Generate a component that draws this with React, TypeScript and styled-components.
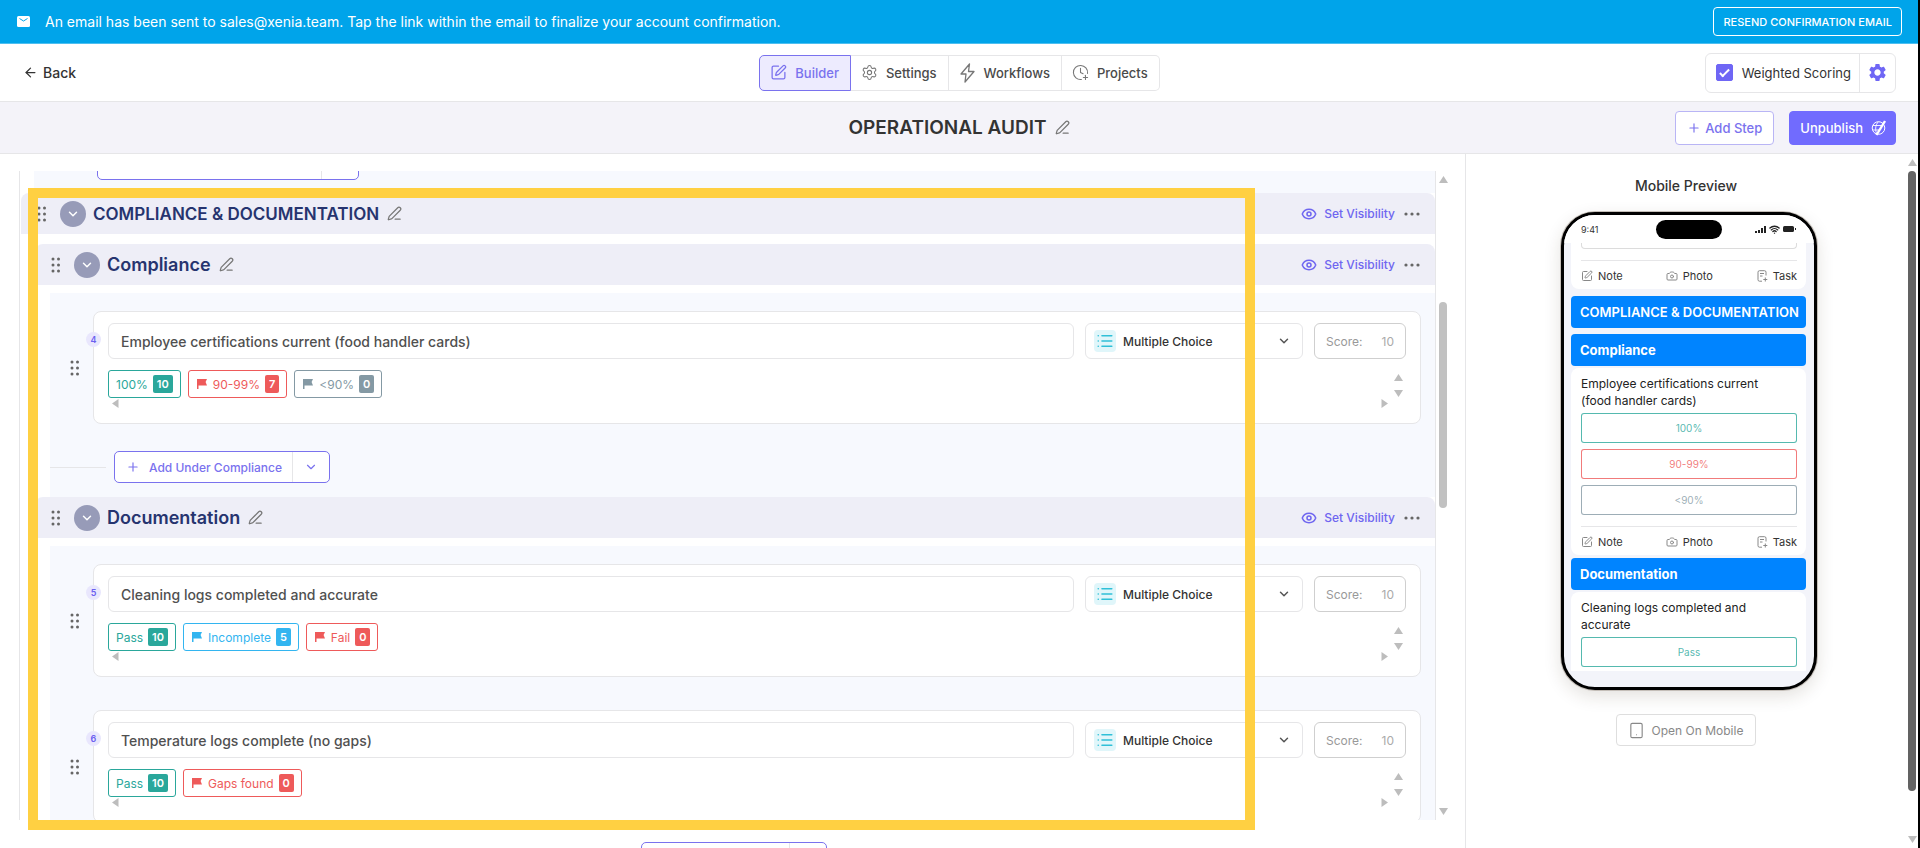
import React from "react";
import styled, { createGlobalStyle, css } from "styled-components";
import {
  ArrowLeft, SquarePen, Settings, ClockPlus, PenLine, Plus, ChevronDown, Eye,
  List, Camera, Tablet, Wifi,
} from "lucide-react";
import { MdSettings } from "react-icons/md";

const GlobalStyle = createGlobalStyle`
  *, *::before, *::after { box-sizing: border-box; }
  body { margin: 0; background: #fff; font-family: Inter, "Open Sans", sans-serif; color: #333; }
  button, input, select { font-family: inherit; margin: 0; }
  h1, h2, h3, p { margin: 0; }
`;

const violet = "#7a72ee";
const line = "#e6e6e8";
const tones = { green: "#2aa79b", red: "#ee5a5a", slate: "#8499a4", blue: "#33b5f0" };
type Tone = keyof typeof tones;

const Page = styled.div`
  height: 100vh;
  min-height: 600px;
  display: flex;
  flex-direction: column;
  overflow: hidden;
  border-right: 2px solid #000;
`;

const Banner = styled.div`
  flex: none;
  height: 44px;
  display: flex;
  align-items: center;
  gap: 15px;
  padding: 0 16px 0 17px;
  background: #00a4ea;
  border-bottom: 1px solid #4dbff0;
  color: #fff;
  font-size: 14px;
  svg { flex: none; }
`;
const BannerText = styled.p` flex: 1; `;
const ResendButton = styled.button`
  height: 29px;
  padding: 0 9px;
  background: none;
  border: 1px solid #fff;
  border-radius: 4px;
  color: #fff;
  font-size: 11px;
  font-weight: 500;
`;

const TopBar = styled.header`
  flex: none;
  height: 58px;
  display: grid;
  grid-template-columns: 1fr auto 1fr;
  align-items: center;
  padding: 0 22px 0 23px;
  border-bottom: 1px solid ${line};
`;
const BackLink = styled.a`
  display: flex;
  align-items: center;
  gap: 5px;
  color: #333;
  font-size: 14px;
  font-weight: 500;
  text-decoration: none;
`;
const Tabs = styled.nav` display: flex; `;
const Tab = styled.button<{ $active?: boolean }>`
  height: 36px;
  display: flex;
  align-items: center;
  gap: 8px;
  padding: 0 11px 0 10px;
  background: #fff;
  border: 1px solid ${line};
  border-left-width: 0;
  color: #4a4a4a;
  font-size: 13px;
  font-weight: 500;
  svg { color: #777; }
  &:first-child { border-left-width: 1px; border-radius: 5px 0 0 5px; }
  &:last-child { border-radius: 0 5px 5px 0; }
  ${(p) => p.$active && css`
    background: #edebfe;
    border-color: ${violet};
    color: ${violet};
    svg { color: ${violet}; }
  `}
`;
const Scoring = styled.div`
  justify-self: end;
  height: 40px;
  display: flex;
  border: 1px solid ${line};
  border-radius: 6px;
`;
const ScoringLabel = styled.label`
  display: flex;
  align-items: center;
  gap: 9px;
  padding: 0 8px 0 10px;
  font-size: 13px;
`;
const CheckBox = styled.input`
  appearance: none;
  width: 17px;
  height: 17px;
  display: grid;
  place-items: center;
  border-radius: 2px;
  border: 1px solid #6f66f5;
  &:checked { background: #6f66f5; }
  &:checked::after {
    content: "";
    width: 5px;
    height: 10px;
    margin-bottom: 2px;
    border: solid #fff;
    border-width: 0 2px 2px 0;
    rotate: 45deg;
  }
`;
const GearButton = styled.button`
  width: 36px;
  display: grid;
  place-items: center;
  padding: 0;
  background: none;
  border: 0;
  border-left: 1px solid ${line};
  color: #6f66f5;
`;

const TitleBar = styled.div`
  flex: none;
  height: 52px;
  display: grid;
  grid-template-columns: 1fr auto 1fr;
  align-items: center;
  padding: 0 22px;
  background: #f4f3f9;
  border-bottom: 1px solid ${line};
`;
const Title = styled.h1`
  grid-column: 2;
  display: flex;
  align-items: center;
  gap: 8px;
  font-size: 19px;
  font-weight: 600;
  line-height: 24px;
  svg { color: #777; }
`;
const Actions = styled.div`
  justify-self: end;
  display: flex;
  align-items: center;
  gap: 15px;
`;
const ActionButton = styled.button<{ $primary?: boolean }>`
  height: 34px;
  display: flex;
  align-items: center;
  gap: 4px;
  padding: 0 11px;
  border: 1px solid #b9b5f5;
  border-radius: 4px;
  background: #fff;
  color: ${violet};
  font-size: 13px;
  font-weight: 500;
  ${(p) => p.$primary && css`
    gap: 8px;
    padding: 0 8px 0 10px;
    border-color: #716bfe;
    background: #716bfe;
    color: #fff;
  `}
`;

const Body = styled.div` flex: 1; min-height: 0; display: flex; `;

const Editor = styled.main`
  position: relative;
  flex: 1;
  min-width: 0;
  display: flex;
  flex-direction: column;
  padding: 17px 16px 0 19px;
  border-right: 1px solid ${line};
`;
const ScrollRow = styled.div` flex: 1; min-height: 0; display: flex; gap: 1px; `;
const Steps = styled.div`
  flex: 1;
  min-width: 0;
  overflow: hidden;
  border: solid ${line};
  border-width: 0 1px;
`;
const EditorFooter = styled.div`
  flex: none;
  height: 28px;
  padding-top: 22px;
  overflow: hidden;
  display: flex;
  justify-content: center;
`;
const Highlight = styled.div`
  position: absolute;
  inset: 34px 210px 18px 28px;
  border: 10px solid #ffd042;
  pointer-events: none;
`;

const Bar = styled.div`
  flex: none;
  width: 12px;
  display: flex;
  flex-direction: column;
  align-items: center;
  padding: 4px 0;
`;
const BarTrack = styled.div` flex: 1; width: 8px; display: flex; flex-direction: column; `;
const BarSpace = styled.div<{ $grow: number }>` flex: ${(p) => p.$grow} 0 0; `;
const BarThumb = styled.div<{ $grow: number; $dark?: boolean }>`
  flex: ${(p) => p.$grow} 0 0;
  border-radius: 4px;
  background: ${(p) => (p.$dark ? "#636363" : "#c1c1c1")};
`;

const PreviousPanel = styled.div`
  height: 22px;
  margin-left: 14px;
  padding: 0 0 13px 63px;
  display: flex;
  align-items: flex-end;
  overflow: hidden;
  background: #f7f9fe;
`;
const GroupHeader = styled.div<{ $nested?: boolean }>`
  height: 41px;
  display: flex;
  align-items: center;
  margin-left: ${(p) => (p.$nested ? 15 : 1)}px;
  padding: 0 15px 0 16px;
  border-radius: 8px 8px 0 0;
  background: #eeeef7;
`;
const Toggle = styled.button`
  width: 26px;
  height: 26px;
  display: grid;
  place-items: center;
  margin: 0 7px 0 14px;
  padding: 0;
  border: 0;
  border-radius: 50%;
  background: #979bb8;
  color: #fff;
`;
const GroupTitle = styled.h2<{ $nested?: boolean }>`
  flex: 1;
  display: flex;
  align-items: center;
  gap: 8px;
  color: #26346f;
  font-size: ${(p) => (p.$nested ? 18 : 17)}px;
  font-weight: 600;
  line-height: 24px;
  svg { color: #777; }
`;
const VisibilityButton = styled.button`
  display: flex;
  align-items: center;
  gap: 7px;
  padding: 0;
  border: 0;
  background: none;
  color: #6f66f0;
  font-size: 12px;
  font-weight: 500;
`;
const IconButton = styled.button`
  display: grid;
  place-items: center;
  padding: 0;
  border: 0;
  background: none;
  color: #666;
`;
const GroupGap = styled.div` height: 10px; `;
const Panel = styled.section`
  margin: 8px 0 0 30px;
  padding: 18px 14px 14px 0;
  background: #f7f9fe;
`;

const StepRow = styled.div`
  display: flex;
  align-items: center;
  padding-left: 20px;
  & + & { margin-top: 33px; }
`;
const Card = styled.article`
  position: relative;
  flex: 1;
  min-width: 0;
  height: 113px;
  margin-left: 14px;
  padding: 11px 14px;
  border: 1px solid ${line};
  border-radius: 8px;
  background: #fff;
`;
const StepNumber = styled.span`
  position: absolute;
  left: -8px;
  top: 20px;
  width: 15px;
  height: 15px;
  border-radius: 50%;
  background: #e9e7fd;
  color: #6b60f0;
  font-size: 9px;
  font-weight: 600;
  line-height: 15px;
  text-align: center;
`;
const Fields = styled.div` display: flex; gap: 11px; `;
const TitleInput = styled.input`
  flex: 1;
  min-width: 0;
  height: 36px;
  padding: 0 12px;
  border: 1px solid ${line};
  border-radius: 6px;
  color: #505050;
  font-size: 14px;
  font-weight: 500;
`;
const TypeBox = styled.label`
  width: 218px;
  height: 36px;
  display: flex;
  align-items: center;
  gap: 7px;
  padding: 0 11px 0 8px;
  border: 1px solid ${line};
  border-radius: 6px;
  svg { flex: none; color: #555; }
`;
const TypeTile = styled.span`
  width: 22px;
  height: 22px;
  display: grid;
  place-items: center;
  border-radius: 4px;
  background: #e0f6fa;
  && svg { color: #2fc0d8; }
`;
const TypeSelect = styled.select`
  appearance: none;
  flex: 1;
  min-width: 0;
  padding: 0;
  border: 0;
  background: none;
  color: #333;
  font-size: 12px;
  font-weight: 500;
`;
const ScoreBox = styled.label`
  width: 92px;
  height: 36px;
  display: flex;
  align-items: center;
  justify-content: space-between;
  padding: 0 11px;
  border: 1px solid #cfcfcf;
  border-radius: 6px;
  color: #999;
  font-size: 12px;
`;
const ScoreInput = styled.input`
  width: 24px;
  padding: 0;
  border: 0;
  background: none;
  color: #aaa;
  font-size: 12px;
  text-align: right;
`;
const ChoiceArea = styled.div`
  display: flex;
  justify-content: space-between;
  margin-top: 11px;
`;
const Choices = styled.div` display: flex; gap: 7px; `;
const Chip = styled.button<{ $tone: Tone }>`
  height: 28px;
  display: flex;
  align-items: center;
  gap: 5px;
  padding: 0 7px;
  border: 1px solid ${(p) => tones[p.$tone]};
  border-radius: 3px;
  background: #fff;
  color: ${(p) => tones[p.$tone]};
  font-size: 12px;
`;
const ChipScore = styled.span<{ $tone: Tone }>`
  height: 18px;
  padding: 0 4px;
  border-radius: 2px;
  background: ${(p) => tones[p.$tone]};
  color: #fff;
  font-size: 11px;
  font-weight: 600;
  line-height: 18px;
`;
const SideArrows = styled.div`
  display: flex;
  flex-direction: column;
  gap: 7px;
  padding: 3px 3px 0;
`;
const BottomArrows = styled.div`
  display: flex;
  justify-content: space-between;
  padding: 1px 17px 0 3px;
`;

const AddRow = styled.div` display: flex; align-items: center; gap: 8px; margin-top: 27px; `;
const AddLine = styled.div` width: 56px; height: 1px; background: ${line}; `;
const Split = styled.div`
  flex: none;
  height: 32px;
  display: flex;
  border: 1px solid ${violet};
  border-radius: 5px;
  background: #fff;
`;
const SplitMain = styled.button<{ $width?: number }>`
  width: ${(p) => (p.$width ? `${p.$width}px` : "auto")};
  display: flex;
  align-items: center;
  gap: 9px;
  padding: 0 10px 0 11px;
  border: 0;
  background: none;
  color: ${violet};
  font-size: 12px;
  font-weight: 500;
`;
const SplitMenu = styled(SplitMain)`
  width: 37px;
  justify-content: center;
  padding: 0;
  border-left: 1px solid ${line};
`;

const Preview = styled.aside` flex: none; width: 452px; display: flex; `;
const PreviewMain = styled.div`
  flex: 1;
  display: flex;
  flex-direction: column;
  align-items: center;
  padding-top: 22px;
`;
const PreviewTitle = styled.h2`
  font-size: 14px;
  font-weight: 500;
  line-height: 20px;
`;
const PhoneStand = styled.div` padding: 16px 0 24px 6px; `;
const Phone = styled.div`
  width: 256px;
  height: 478px;
  display: flex;
  flex-direction: column;
  overflow: hidden;
  border: 3px solid #000;
  border-radius: 34px;
  background: #f3f4fa;
  box-shadow: 0 0 0 1px #c4beb8, 0 6px 18px rgba(60, 40, 20, 0.14);
`;
const StatusBar = styled.div`
  flex: none;
  height: 28px;
  display: grid;
  grid-template-columns: 1fr 66px 1fr;
  align-items: center;
  padding: 0 18px 0 17px;
  background: #fff;
  font-size: 9px;
`;
const Island = styled.div` height: 19px; border-radius: 10px; background: #000; `;
const StatusIcons = styled.div`
  justify-self: end;
  display: flex;
  align-items: center;
  gap: 3px;
  color: #222;
`;
const Screen = styled.div`
  padding: 0 8px 0 7px;
  display: flex;
  flex-direction: column;
`;
const PhoneCard = styled.div<{ $cutTop?: boolean; $cutBottom?: boolean }>`
  padding: ${(p) => (p.$cutTop ? 0 : 7)}px 9px ${(p) => (p.$cutBottom ? 4 : 0)}px 10px;
  border-radius: ${(p) => (p.$cutTop ? "0 0 8px 8px" : p.$cutBottom ? "8px 8px 0 0" : "8px")};
  background: #fff;
`;
const CutField = styled.div`
  height: 6px;
  border: 1px solid #dcdcdc;
  border-top: 0;
  border-radius: 0 0 4px 4px;
`;
const PhoneHeading = styled.h3<{ $top: number; $bottom: number; $light?: boolean }>`
  height: 32px;
  margin: ${(p) => p.$top}px 0 ${(p) => p.$bottom}px;
  padding: 0 9px;
  border-radius: 4px;
  background: #0084ff;
  color: #fff;
  font-size: 13px;
  font-weight: ${(p) => (p.$light ? 600 : 700)};
  line-height: 32px;
  white-space: nowrap;
`;
const Question = styled.p` color: #222; font-size: 12px; line-height: 17px; margin-bottom: 4px; `;
const Options = styled.div` display: flex; flex-direction: column; gap: 6px; `;
const Option = styled.button<{ $tone: Tone }>`
  height: 30px;
  padding: 0;
  border: 1px solid ${(p) => tones[p.$tone]}cc;
  border-radius: 3px;
  background: #fff;
  color: ${(p) => tones[p.$tone]}cc;
  font-size: 10px;
`;
const Attach = styled.div`
  display: flex;
  justify-content: space-between;
  margin-top: 11px;
  padding: 8px 0 6px;
  border-top: 1px solid ${line};
`;
const AttachButton = styled.button`
  display: flex;
  align-items: center;
  gap: 5px;
  padding: 0;
  border: 0;
  background: none;
  color: #333;
  font-size: 11px;
  line-height: 14px;
  svg { color: #888; }
`;
const OpenButton = styled.button`
  height: 32px;
  display: flex;
  align-items: center;
  gap: 7px;
  padding: 0 12px 0 11px;
  border: 1px solid #dedede;
  border-radius: 4px;
  background: #fff;
  color: #888;
  font-size: 12px;
`;

const arrowPaths = {
  up: "M4.5 1 9 8H0Z",
  down: "M0 1h9L4.5 8Z",
  left: "M7.5 0v9L1 4.5Z",
  right: "M1.5 0v9L8 4.5Z",
};
const Arrow = ({ dir }: { dir: keyof typeof arrowPaths }) => (
  <svg width="9" height="9" viewBox="0 0 9 9" fill="#bdbdbd" aria-hidden="true">
    <path d={arrowPaths[dir]} />
  </svg>
);
const Grip = () => (
  <svg width="9" height="16" viewBox="0 0 9 16" fill="#666" aria-hidden="true">
    {[2, 8, 14].map((y) => (
      <React.Fragment key={y}>
        <circle cx="2" cy={y} r="1.5" />
        <circle cx="7.5" cy={y} r="1.5" />
      </React.Fragment>
    ))}
  </svg>
);
const Flag = () => (
  <svg width="12" height="10" viewBox="0 0 12 10" fill="currentColor" aria-hidden="true">
    <path d="M1 0H11L9.6 3 11 6.500H2.500V10H1Z" />
  </svg>
);
const MailIcon = () => (
  <svg width="13" height="11" viewBox="0 0 13 11" aria-hidden="true">
    <rect width="13" height="11" rx="1.5" fill="#fff" />
    <path d="m2.5 2.500 4 2.500 4-2.500" fill="none" stroke="#00a4ea" strokeWidth="1" />
  </svg>
);
const BoltIcon = () => (
  <svg width="17" height="20" viewBox="0 0 17 20" fill="none" stroke="currentColor" strokeWidth="1.3" strokeLinejoin="round" aria-hidden="true">
    <path d="M10.500 1 2 11h5L6 19l9-10.500H9.500Z" />
  </svg>
);
const UnpublishIcon = () => (
  <svg width="16" height="16" viewBox="0 0 16 16" fill="none" stroke="currentColor" aria-hidden="true">
    <circle cx="7.5" cy="8" r="6.3" />
    <path d="M2 5.500h9M1.500 10h7M7.500 1.700C4 5 4 11 6 14" strokeWidth=".9" />
    <path d="M14 1 5.500 15" strokeWidth="2.400" />
  </svg>
);
const TaskIcon = () => (
  <svg width="12" height="12" viewBox="0 0 12 12" fill="none" stroke="currentColor" aria-hidden="true">
    <path d="M10 5.500V2.200A1.500 1.500 0 0 0 8.500.700h-5A1.500 1.500 0 0 0 2 2.200v7.500a1.500 1.500 0 0 0 1.500 1.500H6M4 3.500h4M4 6h2.500M9.300 7.500v4M7.300 9.500h4" />
  </svg>
);
const SignalIcon = () => (
  <svg width="11" height="7" viewBox="0 0 11 7" fill="currentColor" aria-hidden="true">
    <path d="M0 5h2v2H0ZM3 4h2v3H3ZM6 2h2v5H6ZM9 0h2v7H9Z" />
  </svg>
);
const BatteryIcon = () => (
  <svg width="13" height="6" viewBox="0 0 13 6" fill="currentColor" aria-hidden="true">
    <rect width="11" height="6" rx="1.500" />
    <path d="M12 2h1v2h-1Z" />
  </svg>
);
const MoreIcon = () => (
  <svg width="25" height="4" viewBox="0 0 25 4" fill="currentColor" aria-hidden="true">
    <circle cx="11" cy="2" r="1.600" />
    <circle cx="17" cy="2" r="1.600" />
    <circle cx="23" cy="2" r="1.600" />
  </svg>
);

const ScrollBar = ({ before, thumb, after, dark }: { before: number; thumb: number; after: number; dark?: boolean }) => (
  <Bar>
    <Arrow dir="up" />
    <BarTrack>
      <BarSpace $grow={before} />
      <BarThumb $grow={thumb} $dark={dark} />
      <BarSpace $grow={after} />
    </BarTrack>
    <Arrow dir="down" />
  </Bar>
);

const Group = ({ title, nested }: { title: string; nested?: boolean }) => (
  <GroupHeader $nested={nested}>
    <Grip />
    <Toggle aria-label={`Collapse ${title}`}><ChevronDown size={14} strokeWidth={2.5} /></Toggle>
    <GroupTitle $nested={nested}>{title}<PenLine size={15} strokeWidth={2} /></GroupTitle>
    <VisibilityButton><Eye size={16} strokeWidth={2.3} />Set Visibility</VisibilityButton>
    <IconButton aria-label="More options"><MoreIcon /></IconButton>
  </GroupHeader>
);

type Choice = { label: string; score: number; tone: Tone; flag?: boolean };
const Step = ({ number, title, choices }: { number: number; title: string; choices: Choice[] }) => (
  <StepRow>
    <Grip />
    <Card>
      <StepNumber>{number}</StepNumber>
      <Fields>
        <TitleInput aria-label={`Step ${number} title`} defaultValue={title} />
        <TypeBox>
          <TypeTile><List size={18} strokeWidth={2.2} /></TypeTile>
          <TypeSelect aria-label="Step type"><option>Multiple Choice</option></TypeSelect>
          <ChevronDown size={14} strokeWidth={2.5} />
        </TypeBox>
        <ScoreBox>Score:<ScoreInput defaultValue="10" /></ScoreBox>
      </Fields>
      <ChoiceArea>
        <Choices>
          {choices.map((c) => (
            <Chip key={c.label} $tone={c.tone}>
              {c.flag && <Flag />}
              {c.label}
              <ChipScore $tone={c.tone}>{c.score}</ChipScore>
            </Chip>
          ))}
        </Choices>
        <SideArrows><Arrow dir="up" /><Arrow dir="down" /></SideArrows>
      </ChoiceArea>
      <BottomArrows><Arrow dir="left" /><Arrow dir="right" /></BottomArrows>
    </Card>
  </StepRow>
);

const Attachments = () => (
  <Attach>
    <AttachButton><SquarePen size={12} />Note</AttachButton>
    <AttachButton><Camera size={12} />Photo</AttachButton>
    <AttachButton><TaskIcon />Task</AttachButton>
  </Attach>
);

export default function App() {
  return (
    <>
      <GlobalStyle />
      <Page>
        <Banner>
          <MailIcon />
          <BannerText>An email has been sent to sales@xenia.team. Tap the link within the email to finalize your account confirmation.</BannerText>
          <ResendButton>RESEND CONFIRMATION EMAIL</ResendButton>
        </Banner>
        <TopBar>
          <BackLink href="#"><ArrowLeft size={15} />Back</BackLink>
          <Tabs>
            <Tab $active><SquarePen size={17} strokeWidth={1.8} />Builder</Tab>
            <Tab><Settings size={17} strokeWidth={1.5} />Settings</Tab>
            <Tab><BoltIcon />Workflows</Tab>
            <Tab><ClockPlus size={17} strokeWidth={1.5} />Projects</Tab>
          </Tabs>
          <Scoring>
            <ScoringLabel><CheckBox type="checkbox" defaultChecked />Weighted Scoring</ScoringLabel>
            <GearButton aria-label="Scoring settings"><MdSettings size={21} /></GearButton>
          </Scoring>
        </TopBar>
        <TitleBar>
          <Title>OPERATIONAL AUDIT<PenLine size={15} strokeWidth={2} /></Title>
          <Actions>
            <ActionButton><Plus size={14} />Add Step</ActionButton>
            <ActionButton $primary>Unpublish<UnpublishIcon /></ActionButton>
          </Actions>
        </TitleBar>
        <Body>
          <Editor>
            <ScrollRow>
              <Steps>
                <PreviousPanel>
                  <Split>
                    <SplitMain $width={223} aria-label="Add step" />
                    <SplitMenu aria-label="More ways to add" />
                  </Split>
                </PreviousPanel>
                <Group title="COMPLIANCE & DOCUMENTATION" />
                <GroupGap />
                <Group title="Compliance" nested />
                <Panel>
                  <Step number={4} title="Employee certifications current (food handler cards)" choices={[
                    { label: "100%", score: 10, tone: "green" },
                    { label: "90-99%", score: 7, tone: "red", flag: true },
                    { label: "<90%", score: 0, tone: "slate", flag: true },
                  ]} />
                  <AddRow>
                    <AddLine />
                    <Split>
                      <SplitMain><Plus size={14} />Add Under Compliance</SplitMain>
                      <SplitMenu aria-label="More ways to add"><ChevronDown size={14} /></SplitMenu>
                    </Split>
                  </AddRow>
                </Panel>
                <Group title="Documentation" nested />
                <Panel>
                  <Step number={5} title="Cleaning logs completed and accurate" choices={[
                    { label: "Pass", score: 10, tone: "green" },
                    { label: "Incomplete", score: 5, tone: "blue", flag: true },
                    { label: "Fail", score: 0, tone: "red", flag: true },
                  ]} />
                  <Step number={6} title="Temperature logs complete (no gaps)" choices={[
                    { label: "Pass", score: 10, tone: "green" },
                    { label: "Gaps found", score: 0, tone: "red", flag: true },
                  ]} />
                </Panel>
              </Steps>
              <ScrollBar before={117} thumb={204} after={296} />
            </ScrollRow>
            <EditorFooter>
              <Split>
                <SplitMain $width={147} aria-label="Add step" />
                <SplitMenu aria-label="More ways to add" />
              </Split>
            </EditorFooter>
            <Highlight />
          </Editor>
          <Preview>
            <PreviewMain>
              <PreviewTitle>Mobile Preview</PreviewTitle>
              <PhoneStand>
                <Phone>
                  <StatusBar>
                    9:41
                    <Island />
                    <StatusIcons><SignalIcon /><Wifi size={11} strokeWidth={3} /><BatteryIcon /></StatusIcons>
                  </StatusBar>
                  <Screen>
                    <PhoneCard $cutTop><CutField /><Attachments /></PhoneCard>
                    <PhoneHeading $top={7} $bottom={6} $light>COMPLIANCE &amp; DOCUMENTATION</PhoneHeading>
                    <PhoneHeading $top={0} $bottom={2}>Compliance</PhoneHeading>
                    <PhoneCard>
                      <Question>Employee certifications current<br />(food handler cards)</Question>
                      <Options>
                        <Option $tone="green">100%</Option>
                        <Option $tone="red">90-99%</Option>
                        <Option $tone="slate">&lt;90%</Option>
                      </Options>
                      <Attachments />
                    </PhoneCard>
                    <PhoneHeading $top={3} $bottom={2}>Documentation</PhoneHeading>
                    <PhoneCard $cutBottom>
                      <Question>Cleaning logs completed and<br />accurate</Question>
                      <Options><Option $tone="green">Pass</Option></Options>
                    </PhoneCard>
                  </Screen>
                </Phone>
              </PhoneStand>
              <OpenButton><Tablet size={17} strokeWidth={1.6} />Open On Mobile</OpenButton>
            </PreviewMain>
            <ScrollBar dark before={4} thumb={622} after={44} />
          </Preview>
        </Body>
      </Page>
    </>
  );
}
